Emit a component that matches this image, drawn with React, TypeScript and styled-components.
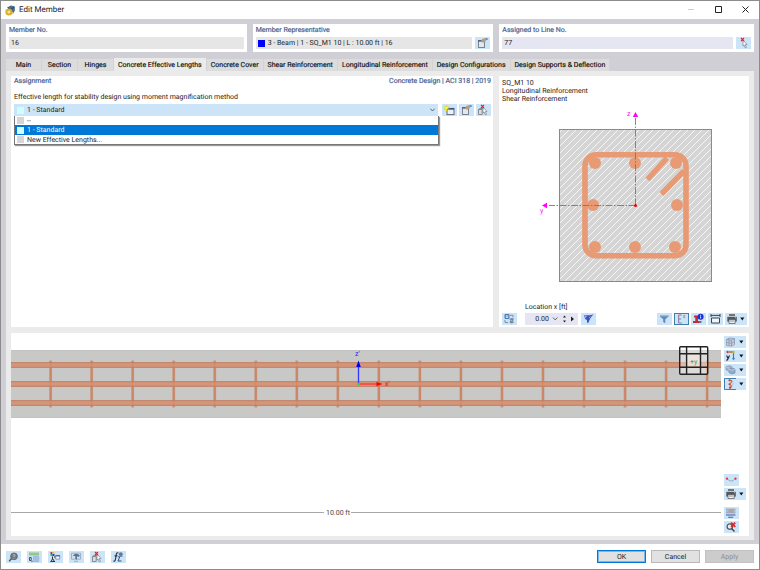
import React, { useState } from "react";
import styled, { createGlobalStyle, css } from "styled-components";

const GlobalStyle = createGlobalStyle`
  *, *::before, *::after { box-sizing: border-box; }
  html, body { margin: 0; padding: 0; }
  body, button, input, select {
    font-family: Roboto, "Open Sans", sans-serif;
    font-size: 7px;
    line-height: 8px;
    color: #1c1c1c;
    text-rendering: geometricPrecision;
  }
`;

const blue = "#cce4f7";

const Dialog = styled.div`
  display: flex;
  flex-direction: column;
  min-height: 100vh;
  border: 1px solid #8c8c8c;
  background: #fff;
`;

const TitleBar = styled.header`
  display: flex;
  align-items: center;
  gap: 3px;
  height: 18px;
  padding-left: 4px;
`;

const Title = styled.h1`
  flex: 1;
  margin: 0;
  font-size: 8px;
  line-height: 10px;
  font-weight: 400;
`;

const WindowButton = styled.button`
  width: 27px;
  height: 16px;
  padding: 0;
  border: 0;
  background: none;
  svg { display: block; margin: auto; }
`;

const Body = styled.main`
  flex: 1;
  display: flex;
  flex-direction: column;
  padding: 5px 5px 4px;
  background: #cfcfd5;
`;

const HeaderCards = styled.div`
  display: grid;
  grid-template-columns: 241fr 241fr 255fr;
  gap: 6px;
  margin-bottom: 6px;
`;

const Card = styled.section`
  height: 28px;
  padding: 2px 3px;
  background: #fff;
`;

const Caption = styled.label`
  display: block;
  margin-bottom: 3px;
  color: #4d6591;
  -webkit-text-stroke: 0.2px #4d6591;
`;

const FieldRow = styled.div`
  display: flex;
  gap: 3px;
`;

const Field = styled.div<{ $tone?: string }>`
  flex: 1;
  display: flex;
  align-items: center;
  gap: 3px;
  min-width: 0;
  height: 12px;
  padding: 0 2px;
  background: ${(p) => p.$tone ?? "#e6e6e6"};
`;

const TextInput = styled.input<{ $align?: string }>`
  flex: 1;
  min-width: 0;
  width: 100%;
  height: 10px;
  padding: 0;
  border: 0;
  outline: 0;
  background: transparent;
  text-align: ${(p) => p.$align ?? "left"};
`;

const Swatch = styled.span<{ $color: string }>`
  flex: none;
  width: 7px;
  height: 7px;
  background: ${(p) => p.$color};
`;

const ToolButton = styled.button<{ $wide?: boolean; $pressed?: boolean }>`
  flex: none;
  display: flex;
  align-items: center;
  width: ${(p) => (p.$wide ? 22 : 15)}px;
  height: 12px;
  padding: 0;
  border: 0;
  background: ${blue};
  ${(p) => p.$pressed && css`box-shadow: inset 0 0 0 1px #3d7fb0;`}
  svg { display: block; flex: none; }
`;

const Tabs = styled.nav`
  display: flex;
  align-items: flex-end;
  height: 13px;
`;

const Tab = styled.button<{ $active?: boolean }>`
  min-width: 36px;
  height: ${(p) => (p.$active ? 13 : 12)}px;
  padding: 0 4px;
  border: 0;
  border-right: 1px solid #d3d3d6;
  background: ${(p) => (p.$active ? "#ebebeb" : "#dcdcdc")};
  color: #111;
  -webkit-text-stroke: 0.15px #111;
  white-space: nowrap;
`;

const TabPage = styled.div`
  flex: 1;
  display: flex;
  flex-direction: column;
  gap: 6px;
  padding: 5px 5px 4px;
  background: #ebebeb;
`;

const Upper = styled.div`
  flex: 1 0 auto;
  display: grid;
  grid-template-columns: 482fr 250fr;
  gap: 6px;
`;

const Panel = styled.section`
  display: flex;
  flex-direction: column;
  min-width: 0;
  padding: 1px 2px 2px 3px;
  background: #fff;
`;

const PanelHead = styled.div`
  display: flex;
  justify-content: space-between;
  margin-bottom: 7px;
  line-height: 9px;
  color: #4d6591;
  -webkit-text-stroke: 0.2px #4d6591;
`;

const Prompt = styled.label`
  margin-bottom: 3px;
`;

const ComboRow = styled.div`
  display: flex;
  gap: 2px;
`;

const Combo = styled.div`
  position: relative;
  flex: 1;
  display: flex;
  align-items: center;
  height: 12px;
  margin-right: 2px;
  padding: 0 3px;
  gap: 3px;
  background: ${blue};
`;

const Select = styled.select`
  flex: 1;
  height: 12px;
  padding: 0;
  border: 0;
  outline: 0;
  appearance: none;
  background: transparent;
  line-height: 12px;
`;

const Menu = styled.ul`
  position: absolute;
  z-index: 1;
  top: 100%;
  left: 0;
  right: -1px;
  margin: 0;
  padding: 0;
  list-style: none;
  border: 1px solid #777;
  border-top: 0;
  background: #fff;
  box-shadow: 1px 1px 1px #9a9a9a;
`;

const MenuItem = styled.li<{ $selected?: boolean }>`
  display: flex;
  align-items: center;
  gap: 3px;
  height: ${(p) => (p.$selected ? 10 : 9)}px;
  padding-left: 2px;
  background: ${(p) => (p.$selected ? "#0078d7" : "#fff")};
  color: ${(p) => (p.$selected ? "#fff" : "#1c1c1c")};
`;

const Notes = styled.div`
  padding-top: 2px;
  line-height: 8px;
`;

const SectionArea = styled.div`
  flex: 1;
  display: flex;
  align-items: flex-start;
  margin: 0 -2px 0 -3px;
  svg { display: block; width: 100%; height: auto; }
`;

const Bar = styled.div`
  display: flex;
  align-items: flex-end;
  gap: 2px;
`;

const Location = styled.div`
  flex: none;
  width: 53px;
  margin: 0 1px 0 6px;
`;

const LocationLabel = styled.label`
  display: block;
  margin-bottom: 2px;
  white-space: nowrap;
`;

const Spacer = styled.div`
  flex: 1;
`;

const Lower = styled.section`
  flex: none;
  display: flex;
  background: #fff;
`;

const Canvas = styled.div`
  flex: 1;
  min-width: 0;
  svg { display: block; width: 100%; height: auto; }
`;

const Side = styled.div`
  flex: none;
  display: flex;
  flex-direction: column;
  gap: 2px;
  width: 28px;
  padding: 3px;
`;

const Gap = styled.div`
  height: 3px;
`;

const Footer = styled.footer`
  display: flex;
  align-items: center;
  gap: 6px;
  height: 25px;
  padding: 0 5px;
  background: #fff;
`;

const Actions = styled.div`
  display: flex;
  gap: 5px;
  margin-left: auto;
`;

const ActionButton = styled.button<{ $primary?: boolean }>`
  width: 49px;
  height: 13px;
  padding: 0;
  border: ${(p) => (p.$primary ? "1px solid #0078d7" : "1px solid #b9b9b9")};
  background: #e1e1e1;
  ${(p) => p.$primary && css`box-shadow: inset 0 0 0 1px #7ab8ea;`}
  &:disabled { background: #cccccc; border-color: #c2c2c2; color: #8d8d8d; }
`;

const Icon = ({ children }: { children: React.ReactNode }) => (
  <svg width="15" height="12" viewBox="0 0 15 12" fill="none" aria-hidden="true">{children}</svg>
);

const Arrow = () => (
  <svg width="5" height="4" viewBox="0 0 5 4" aria-hidden="true"><path d="M0.3.5h4L2.3 3.6z" fill="#111" /></svg>
);

const HandIcon = () => (
  <Icon>
    <rect x="3.5" y="3.5" width="6" height="7" fill="#dfe7f1" stroke="#7b8592" />
    <path d="M3 3h7v1.7H3z" fill="#63666f" />
    <path d="M5.8 4.6 7.3 2l3.2-1 1.2.8-1.3 3-2.4.9z" fill="#b89a80" />
    <path d="M10.7 1.2h2v1.5l-1.4.4z" fill="#4b82bd" />
  </Icon>
);

const NewIcon = () => (
  <Icon>
    <rect x="5" y="4.4" width="7" height="6.2" fill="#eaf1fa" stroke="#626c7c" />
    <path d="M5 4h7v1.7H5z" fill="#3e5488" />
    <path d="M4.5 1v6M1.5 4h6M2.3 1.8l4.4 4.4M6.7 1.8 2.3 6.2" stroke="#d8d800" strokeWidth=".9" />
    <circle cx="4.5" cy="4" r="1.2" fill="#ffff52" />
  </Icon>
);

const PickIcon = ({ box = false }: { box?: boolean }) => (
  <Icon>
    {box && <path d="M2.5 5.5h3.7v5H2.5zM2.5 5.5l1.5-1h3" fill="#d9dce2" stroke="#777" strokeWidth=".8" />}
    <path d="m7 3 4 4.5-1.7.1 1.1 2.8-1.2.4-1-2.7L7 9z" fill="#fff" stroke="#777c86" strokeWidth=".7" />
    <path d="m5 1 3 3M8 1 5 4" stroke="#e3242d" strokeWidth="1.1" />
  </Icon>
);

const CopyAxesIcon = () => (
  <Icon>
    <path d="M3 1.5h4v4H3z" fill="#83a9d5" stroke="#4e78b5" />
    <path d="M4 3h2M4 4.5h2" stroke="#fff" strokeWidth=".6" />
    <path d="M8 2.3h3v2M3 7v2.5h3" stroke="#7690b1" />
    <path d="m7.5 6 2-1 2.5.5-1 2 1 2-2.5 1-2-1 .8-1.7z" fill="#7c8592" />
    <path d="m8.5 7 2 1.5" stroke="#cce4f7" strokeWidth=".7" />
  </Icon>
);

const PickLocationIcon = () => (
  <Icon>
    <path d="M3.3 2.5h4v2.8h-3z" fill="#b8c8ee" stroke="#5a6fc0" strokeWidth=".8" />
    <path d="M6 2.7 12.3 1.5 9.2 5.5 7.2 10 6 9.5V7L4 6z" fill="#3f50c4" />
    <path d="m8 5 2.5-2" stroke="#adc4ff" strokeWidth=".6" />
  </Icon>
);

const FunnelIcon = () => (
  <Icon><path d="M3 2.5h8.5v.9L8.3 6.3v3.900L6.2 9V6.3L3 3.4z" fill="#6289ba" /><path d="M4 3.100h6.500" stroke="#a3bedc" strokeWidth=".6" /></Icon>
);

const RulerIcon = () => (
  <Icon>
    <path d="M7.5 2H4.7v8h3M4.7 6H7" stroke="#8c769b" />
    <path d="M9 2.5h2L9.300 4.500h2" stroke="#d47290" strokeWidth=".8" />
  </Icon>
);

const InfoIcon = () => (
  <Icon>
    <path d="M3 2.5h4V8h2.5v2H2V8h2.3V4.5H3z" fill="#bd2f3e" />
    <path d="M8 8h2.5v1.8H8z" fill="#636c9c" />
    <circle cx="9.6" cy="3.7" r="3" fill="#1432d7" />
    <path d="M9.6 1.8v1M9.6 3.4v2" stroke="#fff" strokeWidth=".9" />
  </Icon>
);

const DimensionIcon = () => (
  <Icon><path d="M3 1v3M12 1v3M3 2.4h9" stroke="#333" strokeWidth=".9" /><path d="M3.5 5h8v5h-8z" fill="#edf4fb" stroke="#444" /></Icon>
);

const PrinterIcon = () => (
  <Icon>
    <path d="M4 1h6v2H4z" fill="#707479" />
    <path d="M2.3 3.8h9.5v4.8H2.3z" fill="#54585d" />
    <path d="M4 6.5h6.2v4H4z" fill="#e9eef3" stroke="#555" strokeWidth=".7" />
    <path d="M5 8h4.2" stroke="#777" strokeWidth=".7" /><path d="M10 4.7h1" stroke="#ddd" strokeWidth=".7" />
  </Icon>
);

const CubeIcon = () => (
  <Icon><path d="m2.5 3.5 3-1.5 5 .6v6L7.4 10.2l-4.9-.7zM2.5 3.5l5 .8v5.7M7.5 4.3l3-1.7M5 2.2v7.4M3 6.5l4.5.7 3-1.4" fill="#c3cee2" stroke="#8e98ad" strokeWidth=".8" /></Icon>
);

const AxisViewIcon = () => (
  <Icon>
    <path d="M3 2h6" stroke="#d33331" strokeWidth="1.2" /><path d="M2 2 4 .6v2.8z" fill="#d33331" />
    <path d="M9.5 3v5.5" stroke="#4877c5" strokeWidth="1.2" /><path d="m8 8 1.5 2.5L11 8z" fill="#4877c5" />
    <circle cx="9.5" cy="2" r="1.3" fill="#a8c932" />
    <path d="m2.6 5.5 1.3 2.8M5.5 5.5 3.8 9.2q-.4 1-1.5.9" stroke="#222" strokeWidth="1.1" />
  </Icon>
);

const SolidsIcon = () => (
  <Icon><path d="m2 2.5 4-.7 2 1V6l-3 1.3-3-1.6z" fill="#9fb2ca" stroke="#8498b2" strokeWidth=".7" /><path d="m5 5 4-.8 2 1V9L7.8 10 5 8.6z" fill="#92abc8" stroke="#758ba8" strokeWidth=".7" /><path d="m2 2.8 3 1v3M5 5.3l2.8 1 3-1" stroke="#d3dce7" strokeWidth=".6" /></Icon>
);

const MemberColorIcon = () => (
  <Icon>
    <path d="M12 .5H.5v11H12" stroke="#3d7fb0" strokeWidth="1" />
    <path d="M6 2.3q3.5.2 1 2.4-2.5 1.3 0 2.8 1.5 1.5-1 2.2" stroke="#d5693f" strokeWidth="1.2" />
    <circle cx="5.5" cy="2.3" r="1.1" fill="#d83432" /><circle cx="5.5" cy="6.2" r="1" fill="#d83432" /><circle cx="6" cy="9.7" r="1.1" fill="#d83432" />
    <path d="M8.3 7.8q1.2-2 .7-3.5" stroke="#8cc4de" strokeWidth=".8" />
  </Icon>
);

const CurveIcon = () => (
  <Icon><path d="M3 4.5q4.3 5.2 8.5 0" stroke="#8eabc9" /><circle cx="3" cy="4.7" r="1.1" fill="#df3036" /><circle cx="11.5" cy="4.7" r="1.1" fill="#df3036" /></Icon>
);

const LayersIcon = () => (
  <Icon><path d="M2 2.2h9.5M2 4h9.5M2 5.8h9.5" stroke="#7185ad" strokeWidth=".8" /><path d="m5.2 3 2.5-1.1 2.6 1-1.8 3H6.6L4 4.8z" fill="#bba38f" /><path d="M2 8h9.5M4.2 10.2h5" stroke="#3f5bb3" strokeWidth="1.1" /></Icon>
);

const ZoomResetIcon = () => (
  <Icon><circle cx="5.8" cy="5.6" r="2.7" fill="#e7edf2" stroke="#555" strokeWidth="1.2" /><path d="m7.5 7.5 3 3" stroke="#444" strokeWidth="1.4" /><path d="m7 1.7 4.2 4.2M11.2 1.7 7 5.9" stroke="#e2262c" strokeWidth="1.9" /></Icon>
);

const HelpIcon = () => (
  <Icon><circle cx="8" cy="5.3" r="3.4" fill="#747d86" stroke="#59616a" strokeWidth=".8" /><path d="m5.5 7.5-2.3 2.7" stroke="#555" strokeWidth="1.5" /><path d="M7 4q1.8-1.2 1.9.4L7.9 6M7.7 7.3v.6" stroke="#c5d0d8" strokeWidth=".8" /></Icon>
);

const UnitsIcon = () => (
  <Icon><path d="M2 1.5h10v3H2z" fill="#92ca83" /><path d="M2.5 6.5h1.7v3H2.5z" stroke="#354254" strokeWidth=".9" /><path d="M5 9.8v1" stroke="#222" /><path d="M6.5 5.5h5.2v5H6.5zM8.2 5.5v5M10 5.5v5M6.5 7.2h5.2M6.5 9h5.2" fill="#c9daf5" stroke="#92add8" strokeWidth=".7" /></Icon>
);

const ColorsIcon = () => (
  <Icon><path d="M2.5 1h2v2h-2z" fill="#dc2727" /><path d="M4.5 1h2v2h-2z" fill="#e2d02d" /><path d="M2.5 3h2v2h-2z" fill="#2cb448" /><path d="M4.5 3h2v2h-2z" fill="#2742c8" /><path d="M4.5 5.5V8L3 10.5M4.5 7.5l2 3M2.5 10.5H7M6 6h2" stroke="#333" strokeWidth="1" /><path d="M7.7 4.6h4v3.5h-4z" fill="#fff" stroke="#7585ac" strokeWidth=".8" /><path d="M7.5 4.2H12v1.2H7.5z" fill="#435da9" /></Icon>
);

const ViewIcon = () => (
  <Icon><path d="M2.5 2.2h9v6h-9zM5 10.3h4" fill="#d6e0ea" stroke="#92a3b7" strokeWidth=".8" /><path d="M3.5 5q3.500-4.500 7.500-.3L9.500 6 8 5v3.500Q5.500 8 6.500 5.500 5 4.500 3.500 5z" fill="#547297" /></Icon>
);

const FormulaIcon = () => (
  <Icon><path d="M7.5 2Q5.5 1 5.2 4L4.4 8.5Q4 11 2.5 9.8M3.5 4.8h3" stroke="#293b58" strokeWidth="1.2" /><path d="m7 5.8 1.8.1L7 10h3.5" stroke="#3c5378" strokeWidth="1" /><circle cx="9.8" cy="3.2" r="1.9" fill="#60789f" /><path d="M8.3 5.5h3.2" stroke="#60789f" strokeWidth=".8" /></Icon>
);

const AppIcon = () => (
  <svg width="11" height="11" viewBox="0 0 11 11" aria-hidden="true">
    <path d="M2.5 2.5 5.5.5l4 .8L10 5 8.2 8.4 5.4 9z" fill="#496b8d" />
    <path d="m2.5 2.3 2.8 2 4.2-2M5.3 4.3 7 8" stroke="#243c54" strokeWidth=".8" fill="none" />
    <circle cx="3.9" cy="7" r="2.5" fill="#f3e2a2" stroke="#dbad2d" strokeWidth="2" />
    <path d="M1 4.5v2M7.5 7v2" stroke="#e6c557" />
  </svg>
);

const bars = [[96, 61], [136, 61], [177, 61], [94, 103], [178, 103], [96, 145], [136, 145], [176, 145]];

const CrossSection = () => (
  <svg viewBox="0 1 250 193" role="img" aria-label="Cross-section">
    <defs>
      <pattern id="hatch" width="7" height="7" patternUnits="userSpaceOnUse">
        <path d="M-1 1 1-1M-1 8 8-1M6 8 8 6" stroke="#f6f6f6" strokeWidth="1" />
      </pattern>
    </defs>
    <rect x="60.5" y="27.5" width="152" height="152" fill="#d5d5d5" />
    <rect x="60.5" y="27.5" width="152" height="152" fill="url(#hatch)" stroke="#8a8a8a" />
    <rect x="86" y="52.7" width="101" height="101" rx="11" fill="none" stroke="#e89a74" strokeWidth="5.6" />
    <path d="m168 56-19.5 21.5M185 69l-22.5 23" fill="none" stroke="#e89a74" strokeWidth="5.4" />
    {bars.map(([x, y]) => <circle key={x + "-" + y} cx={x} cy={y} r="6" fill="#e89a74" />)}
    <path d="M136.5 103.5V16M136.5 103.5H50" stroke="#c244c2" strokeWidth=".9" strokeDasharray="7 1.5 1.5 1.5" />
    <path d="m136.5 10-2.7 5h5.4zM43 103.5l5-2.7v5.4z" fill="#f0f" />
    <circle cx="136.5" cy="103.5" r="1.5" fill="#e00" />
    <text x="128" y="14" fontSize="7" fill="#f0f">z</text>
    <text x="41" y="111" fontSize="7" fill="#f0f">y</text>
  </svg>
);

const stirrups = Array.from({ length: 17 }, (_, i) => 39.5 + i * 41.03);

const BeamView = () => (
  <svg viewBox="0 0 710 203" role="img" aria-label="Member side view">
    <rect y="17" width="710" height="68" fill="#c8c8c7" />
    <path d="M0 17.5h710M0 84.5h710" stroke="#bdbdbd" strokeWidth=".6" />
    {stirrups.map((x) => (
      <g key={x}>
        <rect x={x - 1.2} y="27.5" width="2.4" height="47" fill="#cf8e6f" />
        <path d={`M${x + 1.1} 28v46`} stroke="#b97d60" strokeWidth=".4" />
      </g>
    ))}
    {[32, 51, 70].map((y) => (
      <g key={y}>
        <rect y={y - 2.7} width="710" height="5.4" fill="#d4967a" />
        <path d={`M0 ${y - 2.3}h710M0 ${y + 2.3}h710`} stroke="#b97a60" strokeWidth=".8" />
      </g>
    ))}
    {stirrups.map((x) => <path key={x} d={`M${x} 29v44`} stroke="#c9805c" strokeWidth="1.2" opacity=".5" />)}
    <path d="M347.5 51V33" stroke="#3535ff" strokeWidth="1.3" />
    <path d="m347.5 27.5-2.3 6.5h4.6z" fill="#00f" />
    <path d="M347.5 51h20" stroke="#f33" strokeWidth="1.3" />
    <path d="m371.5 51-6-2.2v4.4z" fill="#f00" />
    <circle cx="347.5" cy="51" r="1.3" fill="#2fe02f" />
    <text x="344" y="23" fontSize="7" fill="#22f">z'</text>
    <text x="374" y="53" fontSize="7" fill="#f00">x'</text>
    <path d="M668.7 13.7h27.6V41h-27.6z" fill="#fff" fillOpacity=".35" />
    <path d="M675.5 20.5H689v13h-13.5z" fill="#f3e4de" fillOpacity=".75" />
    <path d="M669.7 13.8h26a1 1 0 0 1 1 1v25.4a1 1 0 0 1-1 1h-26a1 1 0 0 1-1-1V14.8a1 1 0 0 1 1-1zM675.6 14v27M689.5 14v27M669 20.7h27.5M669 34.3h27.5" fill="none" stroke="#222" strokeWidth="1.4" />
    <text x="679" y="31" fontSize="7" fill="#4a9b4a">+y</text>
    <path d="M0 179.5h313M340 179.5h370" stroke="#a8a8a8" />
    <text x="315" y="182" fontSize="7" fill="#444">10.00 ft</text>
  </svg>
);

const tabNames = [
  "Main", "Section", "Hinges", "Concrete Effective Lengths", "Concrete Cover", "Shear Reinforcement",
  "Longitudinal Reinforcement", "Design Configurations", "Design Supports & Deflection",
];

export default function App() {
  const [tab, setTab] = useState(3);
  return (
    <>
      <GlobalStyle />
      <Dialog>
        <TitleBar>
          <AppIcon />
          <Title>Edit Member</Title>
          <div>
            <WindowButton aria-label="Minimize"><svg width="7" height="7"><path d="M0 3.5h6" stroke="#ccc" /></svg></WindowButton>
            <WindowButton aria-label="Maximize"><svg width="7" height="7"><path d="M.5.5h6v6h-6z" fill="none" stroke="#222" /></svg></WindowButton>
            <WindowButton aria-label="Close"><svg width="7" height="7"><path d="m.5.5 6 6M6.5.5l-6 6" stroke="#222" /></svg></WindowButton>
          </div>
        </TitleBar>
        <Body>
          <HeaderCards>
            <Card>
              <Caption htmlFor="number">Member No.</Caption>
              <Field><TextInput id="number" defaultValue="16" readOnly /></Field>
            </Card>
            <Card>
              <Caption htmlFor="representative">Member Representative</Caption>
              <FieldRow>
                <Field>
                  <Swatch $color="#0000ff" />
                  <TextInput id="representative" defaultValue="3 - Beam | 1 - SQ_M1 10 | L : 10.00 ft | 16" readOnly />
                </Field>
                <ToolButton aria-label="Edit representative"><HandIcon /></ToolButton>
              </FieldRow>
            </Card>
            <Card>
              <Caption htmlFor="line">Assigned to Line No.</Caption>
              <FieldRow>
                <Field $tone="#e6e6f2"><TextInput id="line" defaultValue="77" /></Field>
                <ToolButton aria-label="Pick line"><PickIcon /></ToolButton>
              </FieldRow>
            </Card>
          </HeaderCards>
          <Tabs role="tablist">
            {tabNames.map((name, i) => (
              <Tab key={name} role="tab" aria-selected={i === tab} $active={i === tab} onClick={() => setTab(i)}>{name}</Tab>
            ))}
          </Tabs>
          <TabPage>
            <Upper>
              <Panel>
                <PanelHead><span>Assignment</span><span>Concrete Design | ACI 318 | 2019</span></PanelHead>
                <Prompt htmlFor="effective">Effective length for stability design using moment magnification method</Prompt>
                <ComboRow>
                  <Combo>
                    <Swatch $color="#ccffff" />
                    <Select id="effective" defaultValue="1">
                      <option value="0">--</option>
                      <option value="1">1 - Standard</option>
                      <option value="2">New Effective Lengths...</option>
                    </Select>
                    <svg width="5" height="4" aria-hidden="true"><path d="m.3.6 2.2 2.4L4.7.6" fill="none" stroke="#444" strokeWidth=".8" /></svg>
                    <Menu role="listbox" aria-label="Effective lengths">
                      <MenuItem role="option"><Swatch $color="#d6d6d6" />--</MenuItem>
                      <MenuItem role="option" aria-selected $selected><Swatch $color="#ccffff" />1 - Standard</MenuItem>
                      <MenuItem role="option"><Swatch $color="#d6d6d6" />New Effective Lengths...</MenuItem>
                    </Menu>
                  </Combo>
                  <ToolButton aria-label="New"><NewIcon /></ToolButton>
                  <ToolButton aria-label="Edit"><HandIcon /></ToolButton>
                  <ToolButton aria-label="Pick"><PickIcon box /></ToolButton>
                </ComboRow>
              </Panel>
              <Panel>
                <Notes>SQ_M1 10<br />Longitudinal Reinforcement<br />Shear Reinforcement</Notes>
                <SectionArea><CrossSection /></SectionArea>
                <Bar>
                  <ToolButton aria-label="Axes"><CopyAxesIcon /></ToolButton>
                  <Location>
                    <LocationLabel htmlFor="location">Location x [ft]</LocationLabel>
                    <Field $tone="#e6e6f2">
                      <TextInput id="location" $align="right" defaultValue="0.00" />
                      <svg width="24" height="8" aria-hidden="true">
                        <path d="m1 2.5 2.2 2.4L5.4 2.5" fill="none" stroke="#444" strokeWidth=".8" />
                        <path d="m11 2.5 1.5-2L14 2.5zM11 5.5l1.5 2 1.5-2zM19 1.5 22 4l-3 2.5z" fill="#222" />
                      </svg>
                    </Field>
                  </Location>
                  <ToolButton aria-label="Pick location"><PickLocationIcon /></ToolButton>
                  <Spacer />
                  <ToolButton aria-label="Filter"><FunnelIcon /></ToolButton>
                  <ToolButton aria-label="Values" $pressed><RulerIcon /></ToolButton>
                  <ToolButton aria-label="Section info"><InfoIcon /></ToolButton>
                  <ToolButton aria-label="Dimensions"><DimensionIcon /></ToolButton>
                  <ToolButton aria-label="Print section" $wide><PrinterIcon /><Arrow /></ToolButton>
                </Bar>
              </Panel>
            </Upper>
            <Lower>
              <Canvas><BeamView /></Canvas>
              <Side>
                <ToolButton aria-label="Isometric view" $wide><CubeIcon /><Arrow /></ToolButton>
                <ToolButton aria-label="Axis view" $wide><AxisViewIcon /><Arrow /></ToolButton>
                <ToolButton aria-label="Rendering" $wide><SolidsIcon /><Arrow /></ToolButton>
                <ToolButton aria-label="Member display" $wide><MemberColorIcon /><Arrow /></ToolButton>
                <Spacer />
                <ToolButton aria-label="Supports"><CurveIcon /></ToolButton>
                <ToolButton aria-label="Print view" $wide><PrinterIcon /><Arrow /></ToolButton>
                <Gap />
                <ToolButton aria-label="Layers"><LayersIcon /></ToolButton>
                <ToolButton aria-label="Reset zoom"><ZoomResetIcon /></ToolButton>
              </Side>
            </Lower>
          </TabPage>
        </Body>
        <Footer>
          <ToolButton aria-label="Help"><HelpIcon /></ToolButton>
          <ToolButton aria-label="Units"><UnitsIcon /></ToolButton>
          <ToolButton aria-label="Colors"><ColorsIcon /></ToolButton>
          <ToolButton aria-label="View"><ViewIcon /></ToolButton>
          <ToolButton aria-label="Pick member"><PickIcon box /></ToolButton>
          <ToolButton aria-label="Formula"><FormulaIcon /></ToolButton>
          <Actions>
            <ActionButton $primary>OK</ActionButton>
            <ActionButton>Cancel</ActionButton>
            <ActionButton disabled>Apply</ActionButton>
          </Actions>
        </Footer>
      </Dialog>
    </>
  );
}
